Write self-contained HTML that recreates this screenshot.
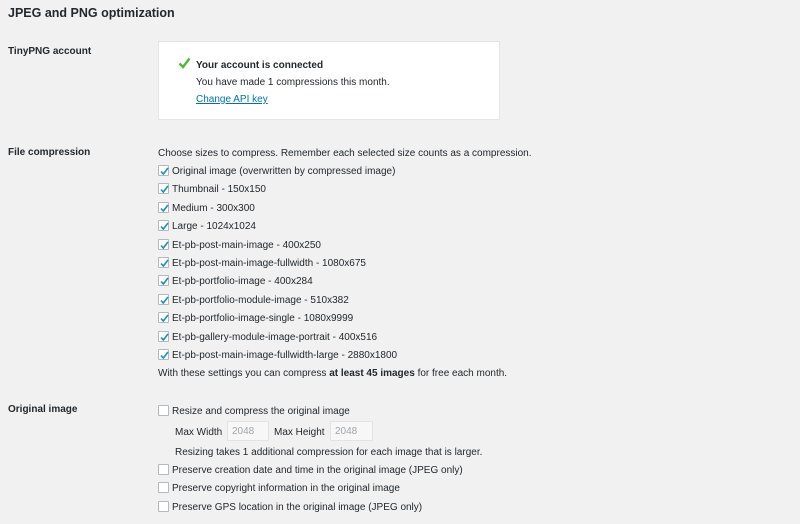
<!DOCTYPE html>
<html><head><meta charset="utf-8"><style>
*{margin:0;padding:0;box-sizing:border-box}
body{width:800px;height:524px;background:#f1f1f1;font-family:"Liberation Sans",sans-serif;font-size:10px;color:#23282d;position:relative;overflow:hidden}
.a{position:absolute;white-space:nowrap;line-height:12px;padding-top:2px}
h1{position:absolute;left:8px;top:6px;font-size:12.5px;font-weight:bold;line-height:15px}
.lbl{font-weight:bold;left:8px}
.box{position:absolute;left:158px;top:41px;width:342px;height:79px;background:#fff;border:1px solid #e5e5e5}
.cb{position:absolute;width:11px;height:11px;background:#fff;border:1px solid #b4b9be;border-radius:1px}
.cb svg{position:absolute;left:0;top:0}
.inp{position:absolute;height:20px;border:1px solid #e3e3e3;background:#f7f7f7;color:#a0a5aa;padding:4px 0 0 4px;line-height:12px}
a{color:#0073aa;text-decoration:underline}
</style></head><body>
<h1>JPEG and PNG optimization</h1>
<div class="a lbl" style="top:44px">TinyPNG account</div>
<div class="box"></div>
<svg class="a" style="left:178px;top:57px;padding:0" width="13" height="12" viewBox="0 0 13 12"><path d="M1.5 6.5 L5 10 L11.5 1.5" stroke="#55b53a" stroke-width="2.4" fill="none"/></svg>
<div class="a" style="left:196px;top:58px;font-weight:bold">Your account is connected</div>
<div class="a" style="left:196px;top:75px">You have made 1 compressions this month.</div>
<div class="a" style="left:196px;top:92px"><a>Change API key</a></div>

<div class="a lbl" style="top:145px">File compression</div>
<div class="a" style="left:158px;top:146px">Choose sizes to compress. Remember each selected size counts as a compression.</div>
<div id="rows"></div>
<div class="a" style="left:158px;top:366px">With these settings you can compress <b>at least 45 images</b> for free each month.</div>

<div class="a lbl" style="top:402px">Original image</div>
<div class="cb" style="left:158px;top:405px"></div>
<div class="a" style="left:172px;top:404px">Resize and compress the original image</div>
<div class="a" style="left:175px;top:425px">Max Width</div>
<div class="inp" style="left:227px;top:421px;width:42px">2048</div>
<div class="a" style="left:274px;top:425px">Max Height</div>
<div class="inp" style="left:330px;top:421px;width:43px">2048</div>
<div class="a" style="left:175px;top:445px">Resizing takes 1 additional compression for each image that is larger.</div>
<div class="cb" style="left:158px;top:464px"></div>
<div class="a" style="left:172px;top:463px">Preserve creation date and time in the original image (JPEG only)</div>
<div class="cb" style="left:158px;top:482px"></div>
<div class="a" style="left:172px;top:481px">Preserve copyright information in the original image</div>
<div class="cb" style="left:158px;top:501px"></div>
<div class="a" style="left:172px;top:500px">Preserve GPS location in the original image (JPEG only)</div>
<script>
var t=["Original image (overwritten by compressed image)","Thumbnail - 150x150","Medium - 300x300","Large - 1024x1024","Et-pb-post-main-image - 400x250","Et-pb-post-main-image-fullwidth - 1080x675","Et-pb-portfolio-image - 400x284","Et-pb-portfolio-module-image - 510x382","Et-pb-portfolio-image-single - 1080x9999","Et-pb-gallery-module-image-portrait - 400x516","Et-pb-post-main-image-fullwidth-large - 2880x1800"];
var h="";t.forEach(function(s,i){var y=Math.round(164+i*18.4);
h+='<div class="cb" style="left:158px;top:'+(y+1)+'px"><svg width="11" height="11" viewBox="0 0 11 11"><path d="M2 5.5 L4.3 8 L9 2" stroke="#1e8cbe" stroke-width="1.6" fill="none"/></svg></div><div class="a" style="left:172px;top:'+y+'px">'+s+'</div>';});
document.getElementById("rows").innerHTML=h;
</script>
</body></html>
